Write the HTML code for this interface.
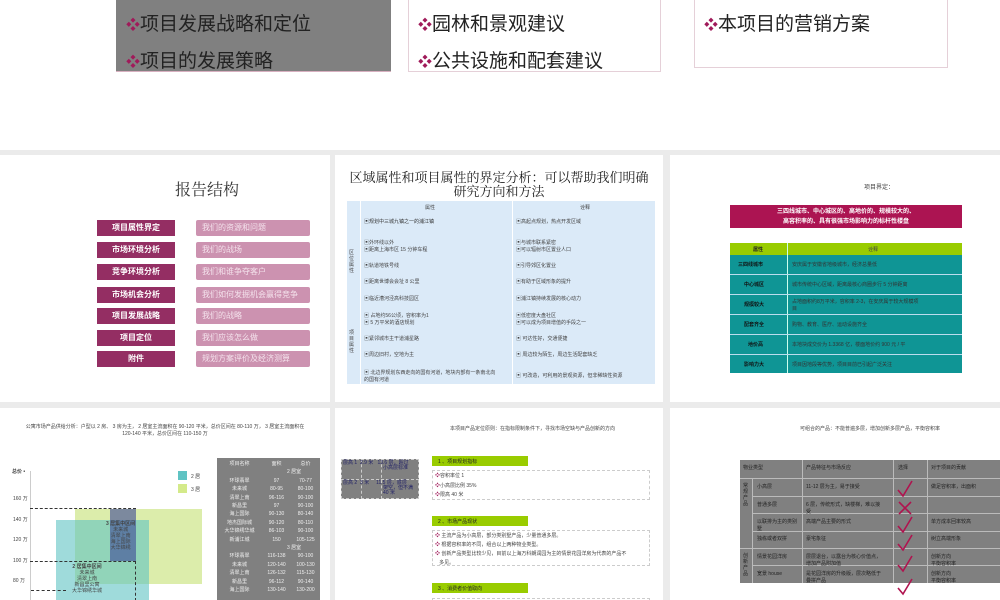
<!DOCTYPE html>
<html><head><meta charset="utf-8"><style>
*{margin:0;padding:0;box-sizing:border-box}
body{width:1000px;height:600px;overflow:hidden;position:relative;background:#fff;font-family:"Liberation Sans","Noto Sans CJK SC",sans-serif;color:#222}
.a{position:absolute}
.slide{position:absolute;background:#fff;overflow:hidden}
.dm{color:#a01a5a;font-size:14px}
.tb{font-size:19px;color:#222;white-space:nowrap}
.lb{background:#942e63;color:#fff;font-size:8px;font-weight:bold;text-align:center;line-height:16px;height:16px}
.rb{background:#cc92b0;color:#f4e2ec;font-size:8px;line-height:16px;height:16px;padding-left:6px;border-radius:2px}
.sm{font-size:5px;color:#444;white-space:nowrap}
</style></head><body>
<!-- top -->
<div class="a" style="left:116px;top:0;width:275px;height:72px;background:#808080;border-bottom:1px solid #d8b0c0"></div>
<div class="a tb" style="left:126px;top:9px"><span class="dm">❖</span>项目发展战略和定位</div>
<div class="a tb" style="left:126px;top:46px"><span class="dm">❖</span>项目的发展策略</div>
<div class="a" style="left:408px;top:0;width:253px;height:72px;border:1px solid #e5d0d8;border-top:none"></div>
<div class="a tb" style="left:418px;top:9px"><span class="dm">❖</span>园林和景观建议</div>
<div class="a tb" style="left:418px;top:46px"><span class="dm">❖</span>公共设施和配套建议</div>
<div class="a" style="left:694px;top:0;width:254px;height:68px;border:1px solid #e5d0d8;border-top:none"></div>
<div class="a tb" style="left:704px;top:9px"><span class="dm">❖</span>本项目的营销方案</div>

<div class="a" style="left:0;top:150px;width:1000px;height:450px;background:#ebebeb"></div>

<!-- slide r2c1 -->
<div class="slide" style="left:0;top:155px;width:330px;height:247px">
<div class="a" style="left:175px;top:22px;font-size:16px;color:#333;font-family:'Liberation Serif','Noto Serif CJK SC',serif">报告结构</div>
<div class="a" style="left:97px;top:65px;width:230px">
<div style="position:relative;height:176px">
<div class="a lb" style="left:0;top:0;width:78px">项目属性界定</div><div class="a rb" style="left:99px;top:0;width:114px">我们的资源和问题</div>
<div class="a lb" style="left:0;top:22px;width:78px">市场环境分析</div><div class="a rb" style="left:99px;top:22px;width:114px">我们的战场</div>
<div class="a lb" style="left:0;top:44px;width:78px">竞争环境分析</div><div class="a rb" style="left:99px;top:44px;width:114px">我们和谁争夺客户</div>
<div class="a lb" style="left:0;top:67px;width:78px">市场机会分析</div><div class="a rb" style="left:99px;top:67px;width:114px">我们如何发掘机会赢得竞争</div>
<div class="a lb" style="left:0;top:88px;width:78px">项目发展战略</div><div class="a rb" style="left:99px;top:88px;width:114px">我们的战略</div>
<div class="a lb" style="left:0;top:110px;width:78px">项目定位</div><div class="a rb" style="left:99px;top:110px;width:114px">我们应该怎么做</div>
<div class="a lb" style="left:0;top:131px;width:78px">附件</div><div class="a rb" style="left:99px;top:131px;width:114px">规划方案评价及经济测算</div>
</div></div>
</div>

<!-- slide r2c2 -->
<div class="slide" style="left:335px;top:155px;width:328px;height:247px">
<div class="a" style="left:0;top:16px;width:328px;text-align:center;font-size:13px;line-height:14px;color:#222;font-family:'Liberation Serif','Noto Serif CJK SC',serif">区域属性和项目属性的界定分析：可以帮助我们明确<br>研究方向和方法</div>
<div class="a" style="left:12px;top:46px;width:308px;height:183px;background:#dbeaf8"></div>
<div class="a" style="left:25px;top:46px;width:1px;height:183px;background:#fff"></div>
<div class="a" style="left:177px;top:46px;width:1px;height:183px;background:#fff"></div>
<div class="a sm" style="left:90px;top:49px">属性</div><div class="a sm" style="left:245px;top:49px">诠释</div>
<div class="a sm" style="left:29px;top:63px;color:#333">▣规划中三城九镇之一的浦江镇</div><div class="a sm" style="left:181px;top:63px">▣高起点规划，热点开发区域</div>
<div class="a sm" style="left:29px;top:84px">▣外环线以外<br>▣距离上海市区 15 分钟车程</div><div class="a sm" style="left:181px;top:84px">▣与城市联系紧密<br>▣可以辐射市区置业人口</div>
<div class="a sm" style="left:29px;top:107px">▣轨道地铁号线</div><div class="a sm" style="left:181px;top:107px">▣引导郊区化置业</div>
<div class="a sm" style="left:29px;top:123px">▣距离世博会会址 8 公里</div><div class="a sm" style="left:181px;top:123px">▣有助于区域形象的提升</div>
<div class="a sm" style="left:29px;top:140px">▣临近漕河泾高科技园区</div><div class="a sm" style="left:181px;top:140px">▣浦江镇持续发展的核心动力</div>
<div class="a sm" style="left:29px;top:157px">▣ 占地约56公顷，容积率为1<br>▣ 5 万平米的酒店规划</div><div class="a sm" style="left:181px;top:157px">▣低密度大盘社区<br>▣可以成为项目增值的手段之一</div>
<div class="a sm" style="left:29px;top:180px">▣紧邻城市主干道浦星路</div><div class="a sm" style="left:181px;top:180px">▣ 可达性好，交通便捷</div>
<div class="a sm" style="left:29px;top:196px">▣周边旧村，空地为主</div><div class="a sm" style="left:181px;top:196px">▣ 周边较为陌生，周边生活配套缺乏</div>
<div class="a sm" style="left:29px;top:214px">▣ 北边界规划东西走向的国有河道，地块内部有一条南北向<br>的国有河道</div><div class="a sm" style="left:181px;top:217px">▣ 可改造，可利用的景观资源，但非稀缺性资源</div>
<div class="a sm" style="left:14px;top:95px;width:5px;white-space:normal;line-height:6px">区位属性</div>
<div class="a sm" style="left:14px;top:175px;width:5px;white-space:normal;line-height:6px">项目属性</div>
</div>

<!-- slide r2c3 -->
<div class="slide" style="left:670px;top:155px;width:330px;height:247px">
<div class="a sm" style="left:194px;top:27px;font-size:6px">项目界定：</div>
<div class="a" style="left:60px;top:50px;width:232px;height:23px;background:#ac1452;color:#fff;font-size:6px;font-weight:bold;text-align:center;line-height:10px;padding-top:2px">三四线城市、中心城区的、高地价的、规模较大的、<br>高容积率的、具有很强市场影响力的标杆性楼盘</div>
<div class="a" style="left:60px;top:88px;width:232px;height:130px;background:#0f9595"></div>
<div class="a" style="left:60px;top:88px;width:232px;height:12px;background:#99cc00"></div>
<div class="a" style="left:117px;top:88px;width:1px;height:130px;background:#cfe"></div>
<div class="a sm" style="left:83px;top:91px;font-weight:bold;color:#222">属性</div><div class="a sm" style="left:198px;top:91px;color:#444">诠释</div>
<div class="a" style="left:60px;top:119px;width:232px;height:1px;background:#bde"></div>
<div class="a" style="left:60px;top:139px;width:232px;height:1px;background:#bde"></div>
<div class="a" style="left:60px;top:159px;width:232px;height:1px;background:#bde"></div>
<div class="a" style="left:60px;top:179px;width:232px;height:1px;background:#bde"></div>
<div class="a" style="left:60px;top:199px;width:232px;height:1px;background:#bde"></div>
<div class="a sm" style="left:68px;top:106px;font-weight:bold;color:#111">三四线城市</div><div class="a sm" style="left:122px;top:106px;color:#333">安庆属于安徽省地级城市，经济总量低</div>
<div class="a sm" style="left:74px;top:126px;font-weight:bold;color:#111">中心城区</div><div class="a sm" style="left:122px;top:126px;color:#333">城市传统中心区域，距离最核心商圈步行 5 分钟距离</div>
<div class="a sm" style="left:74px;top:146px;font-weight:bold;color:#111">规模较大</div><div class="a sm" style="left:122px;top:143px;color:#333">占地面积约8万平米，容积率 2-3，在安庆属于较大规模项<br>目</div>
<div class="a sm" style="left:74px;top:166px;font-weight:bold;color:#111">配套齐全</div><div class="a sm" style="left:122px;top:166px;color:#333">购物、教育、医疗、运动设施齐全</div>
<div class="a sm" style="left:78px;top:186px;font-weight:bold;color:#111">地价高</div><div class="a sm" style="left:122px;top:186px;color:#333">本地块成交价为 1.3368 亿，楼面地价约 900 元 / 平</div>
<div class="a sm" style="left:74px;top:206px;font-weight:bold;color:#111">影响力大</div><div class="a sm" style="left:122px;top:206px;color:#333">项目因地段等优势，项目目前已引起广泛关注</div>
</div>

<!-- slide r3c1 -->
<div class="slide" style="left:0;top:408px;width:330px;height:192px">
<div class="a sm" style="left:0;top:16px;width:330px;text-align:center;line-height:7px">公寓市场产品供给分析：户型以 2 房、 3 房为主， 2 居室主流面积在 90-120 平米，总价区间在 80-110 万， 3 居室主流面积在<br>120-140 平米，总价区间在 110-150 万</div>
<div class="a" style="left:30px;top:63px;width:1px;height:130px;background:#ccc"></div>
<div class="a sm" style="left:12px;top:60px;font-weight:bold">总价 •</div>
<div class="a sm" style="left:13px;top:87px">160 万</div>
<div class="a sm" style="left:13px;top:108px">140 万</div>
<div class="a sm" style="left:13px;top:128px">120 万</div>
<div class="a sm" style="left:13px;top:149px">100 万</div>
<div class="a sm" style="left:13px;top:169px">80 万</div>
<div class="a" style="left:75px;top:101px;width:127px;height:75px;background:#dcedab"></div>
<div class="a" style="left:56px;top:112px;width:93px;height:80px;background:rgba(95,195,195,.6)"></div>
<div class="a" style="left:110px;top:101px;width:26px;height:52px;background:rgba(60,70,150,.6)"></div>
<div class="a" style="left:30px;top:100px;width:106px;border-top:1px dashed #333"></div>
<div class="a" style="left:30px;top:153px;width:106px;border-top:1px dashed #333"></div>
<div class="a" style="left:135px;top:153px;height:40px;border-left:1px dashed #333"></div>
<div class="a" style="left:31px;top:182px;width:35px;border-top:1px dashed #333"></div>
<div class="a sm" style="left:106px;top:113px;font-weight:bold;text-align:center;line-height:6px">3 居集中区间<br><span style="font-weight:normal">未来城<br>清翠上南<br>海上国际<br>大华锦绣</span></div>
<div class="a sm" style="left:72px;top:156px;font-weight:bold;text-align:center;line-height:6px">2 居集中区间<br><span style="font-weight:normal">未来城<br>清翠上南<br>新昌里公寓<br>大华锦绣华城</span></div>
<div class="a" style="left:178px;top:63px;width:9px;height:9px;background:#5fc3c3"></div><div class="a sm" style="left:191px;top:65px">2 居</div>
<div class="a" style="left:178px;top:76px;width:9px;height:9px;background:#d4ea8a"></div><div class="a sm" style="left:191px;top:78px">3 居</div>
<div class="a" style="left:217px;top:50px;width:103px;height:142px;background:#808080"></div>
<div class="a sm" style="left:217px;top:52px;width:103px;color:#eee;line-height:8.4px;font-size:5px">
<div style="display:flex"><span style="width:45px;text-align:center">项目名称</span><span style="width:29px;text-align:center">面积</span><span style="text-align:center;width:29px">总价</span></div>
<div style="padding-left:70px">2 居室</div>
<div style="display:flex"><span style="width:45px;text-align:center">环球翡翠</span><span style="width:29px;text-align:center">97</span><span style="width:29px;text-align:center">70-77</span></div>
<div style="display:flex"><span style="width:45px;text-align:center">未来城</span><span style="width:29px;text-align:center">80-95</span><span style="width:29px;text-align:center">80-100</span></div>
<div style="display:flex"><span style="width:45px;text-align:center">清翠上南</span><span style="width:29px;text-align:center">96-116</span><span style="width:29px;text-align:center">90-100</span></div>
<div style="display:flex"><span style="width:45px;text-align:center">新昌里</span><span style="width:29px;text-align:center">97</span><span style="width:29px;text-align:center">90-100</span></div>
<div style="display:flex"><span style="width:45px;text-align:center">海上国际</span><span style="width:29px;text-align:center">90-130</span><span style="width:29px;text-align:center">80-140</span></div>
<div style="display:flex"><span style="width:45px;text-align:center">地杰国际城</span><span style="width:29px;text-align:center">90-120</span><span style="width:29px;text-align:center">80-110</span></div>
<div style="display:flex"><span style="width:45px;text-align:center">大华锦绣华城</span><span style="width:29px;text-align:center">86-103</span><span style="width:29px;text-align:center">90-100</span></div>
<div style="display:flex"><span style="width:45px;text-align:center">新浦江城</span><span style="width:29px;text-align:center">150</span><span style="width:29px;text-align:center">105-125</span></div>
<div style="padding-left:70px">3 居室</div>
<div style="display:flex"><span style="width:45px;text-align:center">环球翡翠</span><span style="width:29px;text-align:center">116-138</span><span style="width:29px;text-align:center">90-100</span></div>
<div style="display:flex"><span style="width:45px;text-align:center">未来城</span><span style="width:29px;text-align:center">120-140</span><span style="width:29px;text-align:center">100-130</span></div>
<div style="display:flex"><span style="width:45px;text-align:center">清翠上南</span><span style="width:29px;text-align:center">126-132</span><span style="width:29px;text-align:center">115-130</span></div>
<div style="display:flex"><span style="width:45px;text-align:center">新昌里</span><span style="width:29px;text-align:center">96-112</span><span style="width:29px;text-align:center">90-140</span></div>
<div style="display:flex"><span style="width:45px;text-align:center">海上国际</span><span style="width:29px;text-align:center">130-140</span><span style="width:29px;text-align:center">130-200</span></div>
</div>
</div>

<!-- slide r3c2 -->
<div class="slide" style="left:335px;top:408px;width:328px;height:192px">
<div class="a sm" style="left:115px;top:17px">本项目产品定位原则：在指标限制条件下，寻找市场空缺与产品创新的方向</div>
<div class="a" style="left:6px;top:51px;width:78px;height:40px;background:#808080;border:1px dashed #ccc"></div>
<div class="a" style="left:26px;top:51px;height:40px;border-left:1px dashed #ccc"></div>
<div class="a" style="left:46px;top:51px;height:40px;border-left:1px dashed #ccc"></div>
<div class="a sm" style="left:8px;top:53px;color:#226;line-height:5px">层高 1 &nbsp;2.9 米 &nbsp; 13.6 层，超过<br><span style="padding-left:40px">小高层标准</span></div>
<div class="a" style="left:6px;top:71px;width:78px;border-top:1px dashed #ccc"></div>
<div class="a sm" style="left:8px;top:73px;color:#226;line-height:5px">层高 2 &nbsp;3 米 &nbsp;&nbsp;&nbsp; 11.5 层，底层<br><span style="padding-left:40px">架空，但不满</span><br><span style="padding-left:40px">40 米</span></div>
<div class="a" style="left:97px;top:48px;width:96px;height:10px;background:#99cc00;font-size:5px;color:#222;padding:2px 0 0 6px">1 、项目规划指标</div>
<div class="a" style="left:97px;top:62px;width:218px;height:30px;border:1px dashed #ccc"></div>
<div class="a sm" style="left:100px;top:64px;line-height:9.5px"><span style="color:#a01a5a">❖</span>容积率位 1<br><span style="color:#a01a5a">❖</span>小高层比例 35%<br><span style="color:#a01a5a">❖</span>限高 40 米</div>
<div class="a" style="left:97px;top:108px;width:96px;height:10px;background:#99cc00;font-size:5px;color:#222;padding:2px 0 0 6px">2 、市场产品现状</div>
<div class="a" style="left:97px;top:122px;width:218px;height:36px;border:1px dashed #ccc"></div>
<div class="a sm" style="left:100px;top:124px;line-height:9px"><span style="color:#a01a5a">❖</span> 主流产品为小高层，部分类别墅产品，少量普通多层。<br><span style="color:#a01a5a">❖</span> 根据容积率的不同，组合以上两种物业类型。<br><span style="color:#a01a5a">❖</span> 创新产品类型比较少见，目前以上海万科朗润园为主的情景花园洋房为代表的产品不<br>&nbsp;&nbsp;&nbsp;多见。</div>
<div class="a" style="left:97px;top:175px;width:96px;height:10px;background:#99cc00;font-size:5px;color:#222;padding:2px 0 0 6px">3 、消费者价值取向</div>
<div class="a" style="left:97px;top:190px;width:218px;height:10px;border:1px dashed #ccc"></div>
</div>

<!-- slide r3c3 -->
<div class="slide" style="left:670px;top:408px;width:330px;height:192px">
<div class="a sm" style="left:130px;top:17px">可组合的产品：不能普遍多层，增加创新多层产品，平衡容积率</div>
<div class="a" style="left:70px;top:52px;width:260px;height:123px;background:#808080"></div>
<div class="a" style="left:70px;top:70px;width:260px;height:1px;background:#bbb"></div>
<div class="a" style="left:82px;top:88px;width:248px;height:1px;background:#bbb"></div>
<div class="a" style="left:82px;top:105px;width:248px;height:1px;background:#bbb"></div>
<div class="a" style="left:82px;top:123px;width:248px;height:1px;background:#bbb"></div>
<div class="a" style="left:70px;top:140px;width:260px;height:1px;background:#bbb"></div>
<div class="a" style="left:82px;top:157px;width:248px;height:1px;background:#bbb"></div>
<div class="a" style="left:82px;top:70px;width:1px;height:105px;background:#bbb"></div>
<div class="a" style="left:132px;top:52px;width:1px;height:123px;background:#bbb"></div>
<div class="a" style="left:223px;top:52px;width:1px;height:123px;background:#bbb"></div>
<div class="a" style="left:257px;top:52px;width:1px;height:123px;background:#bbb"></div>
<div class="a sm" style="left:73px;top:56px;color:#222">物业类型</div><div class="a sm" style="left:136px;top:56px;color:#222">产品特征与市场反应</div><div class="a sm" style="left:228px;top:56px;color:#222">选择</div><div class="a sm" style="left:261px;top:56px;color:#222">对于项目的贡献</div>
<div class="a sm" style="left:73px;top:75px;width:5px;white-space:normal;line-height:6px;color:#222">常规产品</div>
<div class="a sm" style="left:73px;top:145px;width:5px;white-space:normal;line-height:6px;color:#222">创新产品</div>
<div class="a sm" style="left:87px;top:75px;color:#222">小高层</div><div class="a sm" style="left:136px;top:75px;color:#222">11-12 层为主，易于接受</div><div class="a sm" style="left:261px;top:75px;color:#222">做足容积率，出面积</div>
<div class="a sm" style="left:87px;top:93px;color:#222">普通多层</div><div class="a sm" style="left:136px;top:93px;color:#222">6 层，传统形式，缺楼梯，难以接<br>受</div>
<div class="a sm" style="left:87px;top:110px;color:#222">以联排为主的类别<br>墅</div><div class="a sm" style="left:136px;top:110px;color:#222">高端产品主要的形式</div><div class="a sm" style="left:261px;top:110px;color:#222">单方成本回率较高</div>
<div class="a sm" style="left:87px;top:127px;color:#222">独栋或者双拼</div><div class="a sm" style="left:136px;top:127px;color:#222">豪宅象征</div><div class="a sm" style="left:261px;top:127px;color:#222">树立高端形象</div>
<div class="a sm" style="left:87px;top:145px;color:#222">情景花园洋房</div><div class="a sm" style="left:136px;top:145px;color:#222">层层退台，以露台为核心价值点，<br>增加产品附加值</div><div class="a sm" style="left:261px;top:145px;color:#222">创新方向<br>平衡容积率</div>
<div class="a sm" style="left:87px;top:162px;color:#222">宽景 house</div><div class="a sm" style="left:136px;top:162px;color:#222">是花园洋房的升级版，层次略低于<br>叠拼产品</div><div class="a sm" style="left:261px;top:162px;color:#222">创新方向<br>平衡容积率</div>
<svg class="a" style="left:226px;top:70px" width="24" height="122" viewBox="0 0 24 122" fill="none" stroke="#b0134f" stroke-width="1.6">
<path d="M2 12 L7 18 L16 3"/>
<path d="M3 24 L15 36 M15 24 L3 36"/>
<path d="M2 48 L7 54 L16 39"/>
<path d="M2 66 L7 72 L16 57"/>
<path d="M2 87 L7 93 L16 78"/>
<path d="M2 110 L7 116 L16 101"/>
</svg>
</div>
</body></html>
